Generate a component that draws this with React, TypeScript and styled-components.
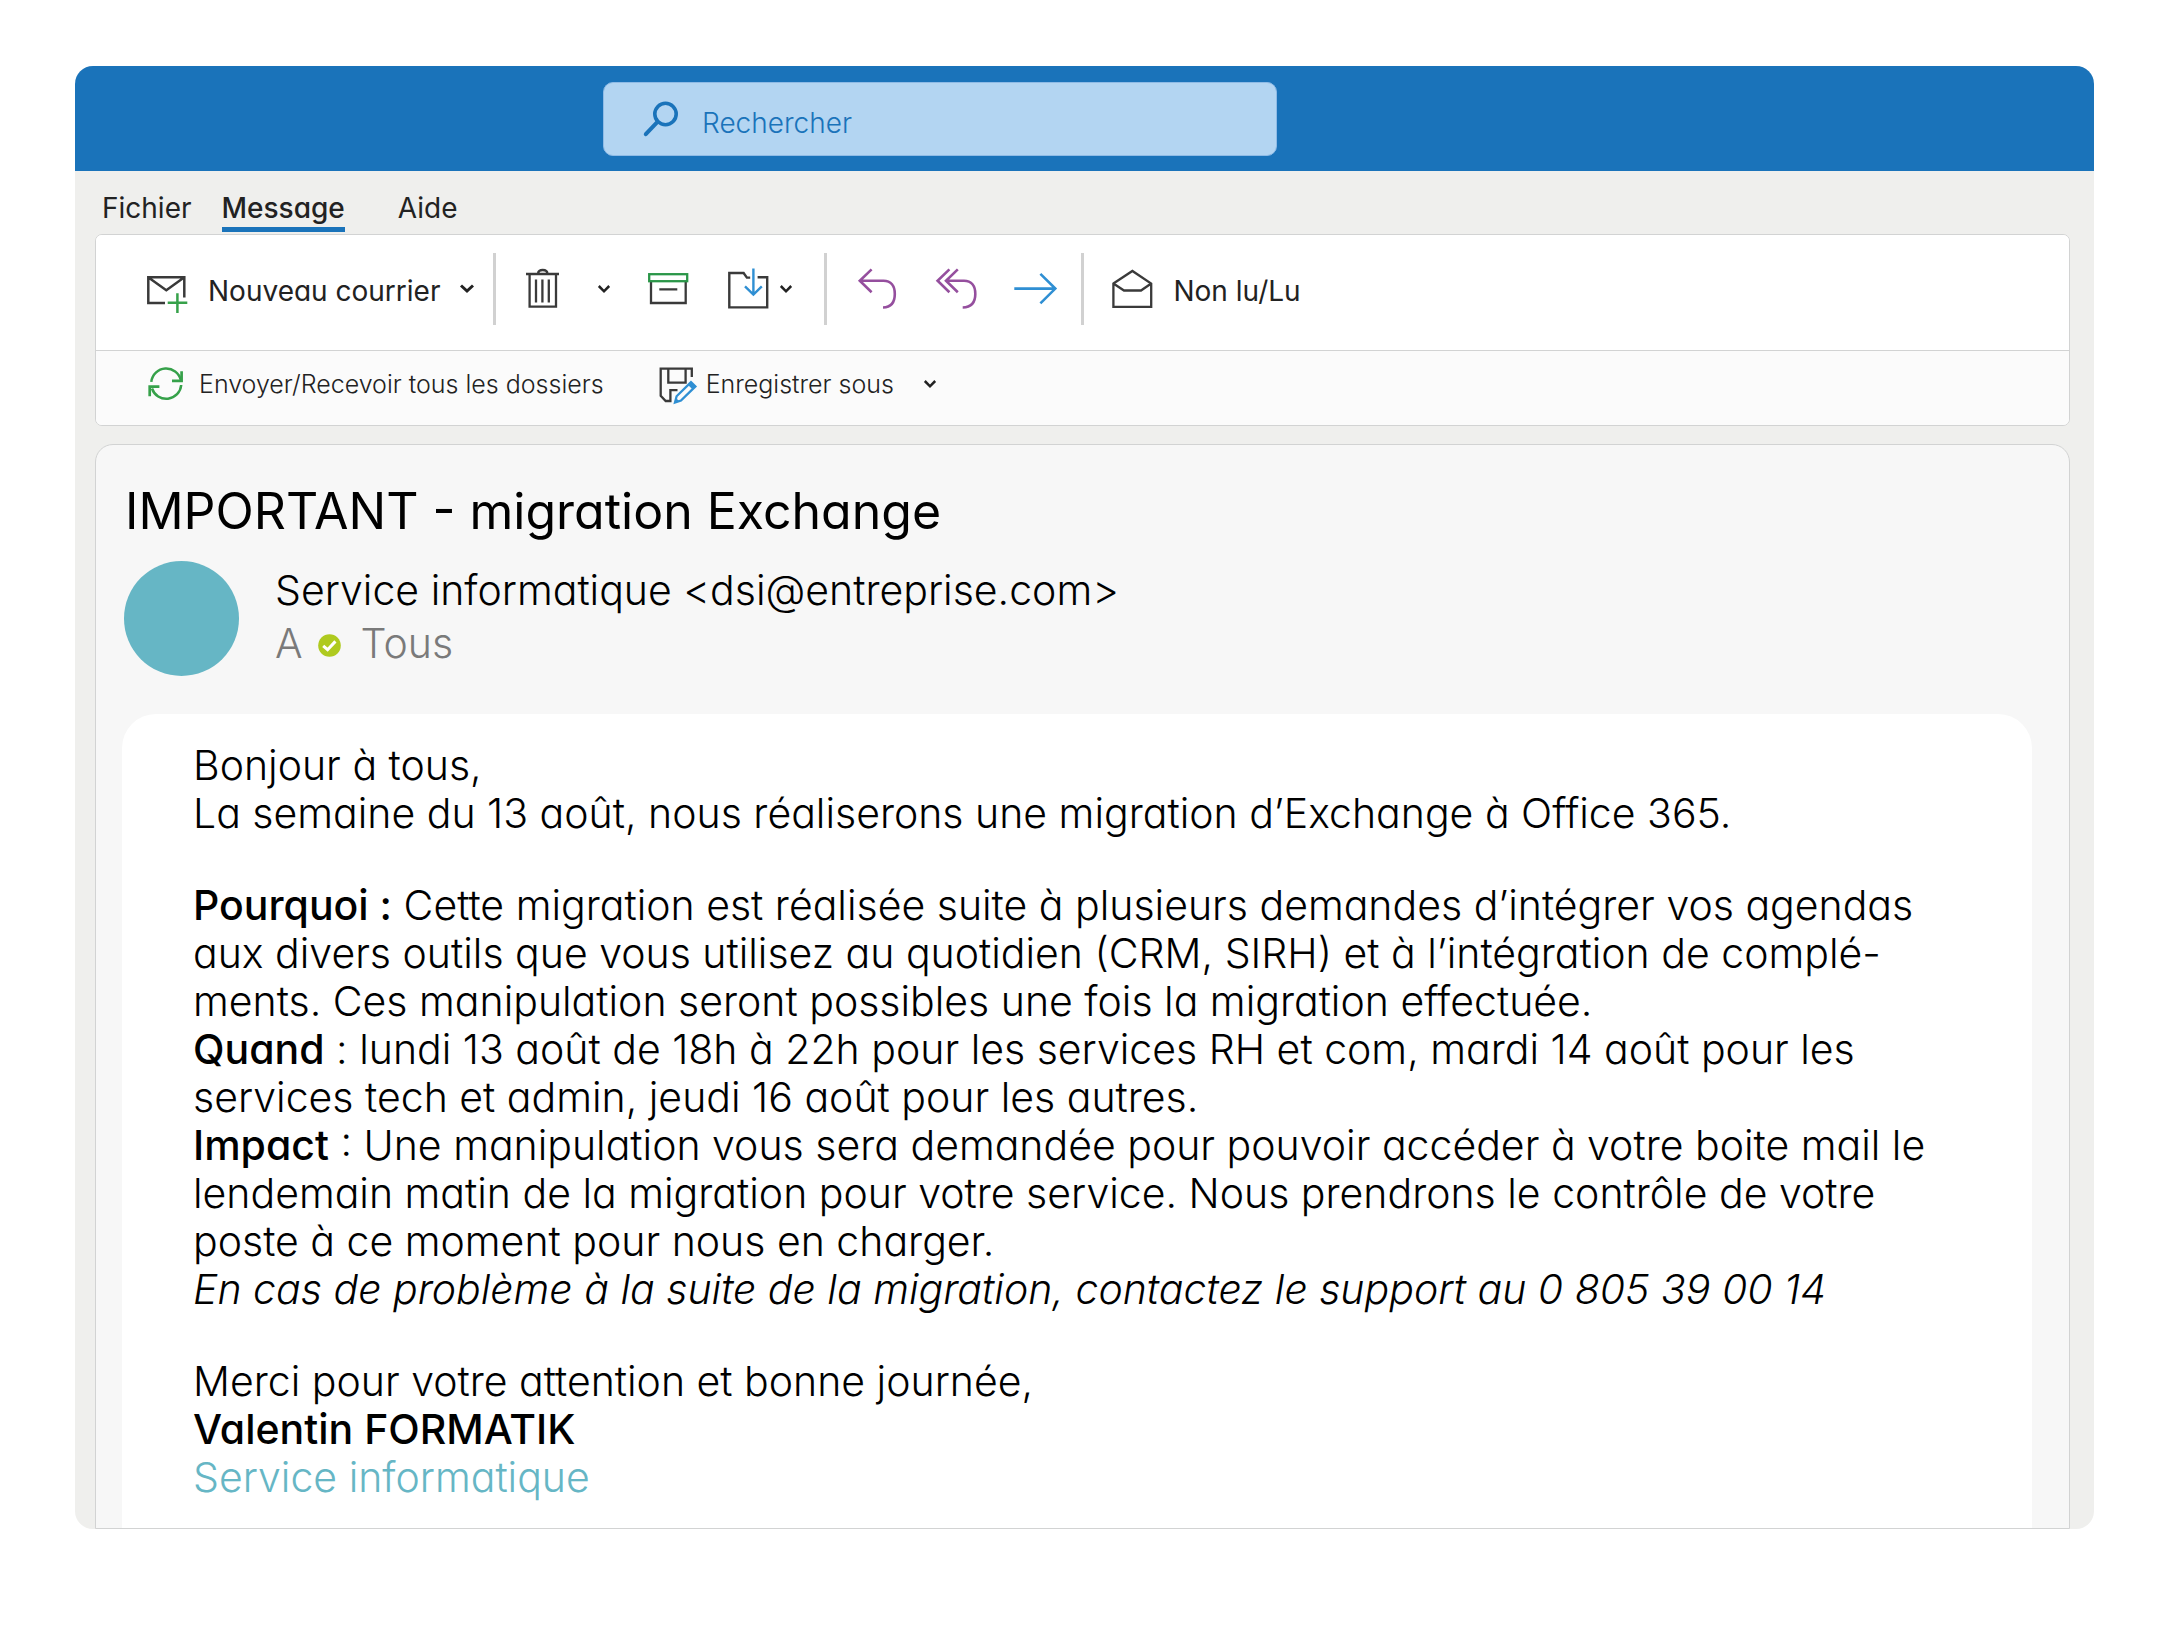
import React from "react";
import styled, { createGlobalStyle } from "styled-components";

const ink = "#222222";
const stroke = "#3a3a3a";
const blue = "#1a73ba";
const arrowBlue = "#2f8fd3";
const green = "#36a14a";
const purple = "#954f9e";
const teal = "#66b6c5";
const line = "#d2d3d3";

const GlobalStyle = createGlobalStyle`
  * { box-sizing: border-box; }
  body {
    margin: 0;
    background: #ffffff;
    color: ${ink};
    font-family: Inter, "Open Sans", sans-serif;
    font-feature-settings: "cv11" 1;
  }
  button, input { font: inherit; font-feature-settings: inherit; color: inherit; }
`;

const Page = styled.div`
  padding: 66px 84px 106px 75px;
`;

const Window = styled.main`
  display: flex;
  flex-direction: column;
  border-radius: 18px;
  overflow: hidden;
  background: #efefed;
`;

const TitleBar = styled.header`
  display: flex;
  padding: 16px 24px 15px 528px;
  background: ${blue};
`;

const SearchBox = styled.label`
  display: flex;
  align-items: center;
  gap: 24px;
  width: 674px;
  height: 74px;
  padding: 0 40px;
  border: 1px solid #8fbbe6;
  border-radius: 10px;
  background: #b3d5f2;
  color: ${blue};
`;

const SearchInput = styled.input`
  flex: 1;
  min-width: 0;
  padding: 8px 0 0;
  border: 0;
  outline: 0;
  background: transparent;
  font-size: 28px;
  font-weight: 300;
  line-height: 36px;
  &::placeholder { color: ${blue}; opacity: 1; }
`;

const Tabs = styled.nav`
  display: flex;
  height: 63px;
  padding: 17px 27px 0;
`;

const Tab = styled.button<{ $active?: boolean; $space?: number }>`
  height: 44px;
  margin: 0 ${(p) => p.$space ?? 0}px 0 0;
  padding: 0;
  border: 0;
  border-bottom: 5px solid ${(p) => (p.$active ? blue : "transparent")};
  background: transparent;
  font-size: 28px;
  font-weight: ${(p) => (p.$active ? 500 : 400)};
  line-height: 38px;
`;

const Ribbon = styled.section`
  margin: 0 24px 0 20px;
  border: 1px solid ${line};
  border-radius: 7px;
  overflow: hidden;
  background: #ffffff;
`;

const RibbonRow = styled.div<{ $quick?: boolean }>`
  display: flex;
  align-items: center;
  height: ${(p) => (p.$quick ? 75 : 115)}px;
  padding: ${(p) => (p.$quick ? "0 0 8px 52px" : "0 0 8px 51px")};
  background: ${(p) => (p.$quick ? "#fbfbfb" : "#ffffff")};
  border-top: ${(p) => (p.$quick ? `1px solid ${line}` : "0")};
`;

const Tool = styled.button<{ $gap?: number; $space?: number; $small?: boolean }>`
  display: flex;
  flex: none;
  align-items: center;
  gap: ${(p) => p.$gap ?? 0}px;
  margin: 0 ${(p) => p.$space ?? 0}px 0 0;
  padding: 0;
  border: 0;
  background: transparent;
  font-size: ${(p) => (p.$small ? 25 : 28)}px;
  font-weight: ${(p) => (p.$small ? 300 : 400)};
  line-height: 36px;
  white-space: nowrap;
`;

const ToolLabel = styled.span`
  padding-top: 4px;
`;

const Separator = styled.span<{ $space: number }>`
  flex: none;
  width: 3px;
  height: 72px;
  margin-right: ${(p) => p.$space}px;
  background: #d1d1d1;
`;

const Icon = styled.svg`
  display: block;
  flex: none;
  fill: none;
  overflow: visible;
`;

const Message = styled.article`
  margin: 18px 24px 0 20px;
  padding: 0 37px 0 26px;
  border: 1px solid ${line};
  border-radius: 18px 18px 0 0;
  background: #f7f7f7;
`;

const Subject = styled.h1`
  margin: 0;
  padding: 36px 0 20px 3px;
  color: #000000;
  font-size: 50px;
  font-weight: 400;
  line-height: 60px;
`;

const Sender = styled.div`
  display: flex;
  align-items: center;
  gap: 36px;
  padding-bottom: 38px;
`;

const Avatar = styled.div`
  width: 115px;
  height: 115px;
  margin-left: 2px;
  border-radius: 50%;
  background: ${teal};
`;

const SenderText = styled.div`
  padding-bottom: 4px;
  font-size: 41px;
  font-weight: 300;
  line-height: 53px;
  color: #000000;
`;

const Recipients = styled.div`
  display: flex;
  align-items: center;
  color: #7a7a7a;
`;

const Badge = styled.span`
  display: flex;
  margin: 4px 20px 0 15px;
`;

const Sheet = styled.div`
  min-height: 814px;
  padding: 27px 40px 19px 71px;
  border-radius: 34px 34px 0 0;
  background: #ffffff;
  color: #000000;
  font-size: 41px;
  font-weight: 300;
  line-height: 48px;
`;

const Paragraph = styled.p`
  margin: 0 0 44px;
  &:last-child { margin: 0; }
`;

const Strong = styled.strong`
  font-weight: 500;
`;

const Signature = styled.span`
  color: ${teal};
`;

const Chevron = ({ bold }: { bold?: boolean }) => (
  <Icon width={bold ? 14 : 12} height={bold ? 9 : 8} viewBox={bold ? "0 0 14 9" : "0 0 12 8"}>
    <path
      d={bold ? "M1 1.5L7 7L13 1.5" : "M.8 1L6 6.3L11.2 1"}
      stroke={ink}
      strokeWidth={bold ? 3 : 2.5}
    />
  </Icon>
);

const SearchIcon = () => (
  <Icon width="34" height="36" viewBox="0 0 34 36" stroke={blue}>
    <circle cx="21.5" cy="13" r="10.7" strokeWidth="3.6" />
    <path d="M13.5 20.8L1.8 33.2" strokeWidth="4" strokeLinecap="round" />
  </Icon>
);

const NewMailIcon = () => (
  <Icon width="41" height="50" viewBox="0 -12 41 50" strokeWidth="2.5" stroke={stroke}>
    <path d="M37.3 21.5V1.3H1.3V27H18M1.5 1.6L19.3 14.2L37 1.6" />
    <path d="M20.7 26.8H40.3M30.4 17.2V37" stroke={green} />
  </Icon>
);

const TrashIcon = () => (
  <Icon width="34" height="40" viewBox="0 0 34 40" strokeWidth="2.3" stroke={stroke}>
    <path d="M0 5H33M12 4.5C12.5 -.2 21 -.2 21.5 4.5M3.6 5.5V37.7H30V5.5M10 10.5V33.5M16.4 10.5V33.5M22.8 10.5V33.5" />
  </Icon>
);

const ArchiveIcon = () => (
  <Icon width="41" height="32" viewBox="0 0 41 32" strokeWidth="2.3" stroke={stroke}>
    <path d="M3 8.5V30H37.7V8.5M11.3 16.3H29.3" />
    <rect x="1.2" y="1.2" width="38" height="7" stroke="#2a9648" />
  </Icon>
);

const MoveIcon = () => (
  <Icon width="41" height="42" viewBox="0 0 41 42" strokeWidth="2.4" stroke={stroke}>
    <path d="M22.2 9.6H18.9L15.6 5H1.3V39.4H39.2V9.2H29.6" />
    <path d="M25.4 .6V26.6M17 18.4L25.4 26.6L33.8 18.4" stroke={arrowBlue} />
  </Icon>
);

const ReplyIcon = () => (
  <Icon width="39" height="42" viewBox="0 0 39 42" strokeWidth="2.6" stroke={purple}>
    <path d="M13.6 1.4L1.8 12.8L13.6 24.2M1.8 12.8H25.5C33 12.8 36.8 18 36.8 26C36.8 34 33 39.3 25 39.5" />
  </Icon>
);

const ReplyAllIcon = () => (
  <Icon width="41" height="42" viewBox="0 0 41 42" strokeWidth="2.6" stroke={purple}>
    <path d="M13.4 1.4L1.6 12.8L13.4 24.2M21.8 1.4L10 12.8L21.8 24.2M10 12.8H28C35.5 12.8 39.3 18 39.3 26C39.3 34 35.5 39.3 26.7 39.5" />
  </Icon>
);

const ForwardIcon = () => (
  <Icon width="43" height="32" viewBox="0 0 43 32" strokeWidth="2.6" stroke={arrowBlue}>
    <path d="M.3 15.6H41.3M26.4 .8L41.3 15.6L26.4 30.4" />
  </Icon>
);

const OpenMailIcon = () => (
  <Icon width="41" height="40" viewBox="0 0 41 40" strokeWidth="2.3" stroke={stroke}>
    <path d="M1.4 14.5L20.4 2L39.2 14.5V37.9H1.4ZM1.4 14.5L12 21.5H29L39.2 14.5" />
  </Icon>
);

const SyncIcon = () => (
  <Icon width="36" height="34" viewBox="0 0 36 34" strokeWidth="2.5" stroke={green}>
    <path d="M3.3 14.8A15 15 0 0 1 32.8 13M33.2 18A15 15 0 0 1 4 21.5" />
    <path d="M33.6 4.3V13.9H24M1.7 29.2V19.6H11.4" strokeWidth="2.7" />
  </Icon>
);

const SaveAsIcon = () => (
  <Icon width="39" height="42" viewBox="0 -4 39 42" strokeWidth="2.3" stroke={stroke}>
    <path d="M32.8 10V1.7H1.7V28.7L6.7 34H11.4V23.2H18.5M9.3 1.7V15.7H26.6V1.7" />
    <path d="M16 35.5L17.6 29.3L32 15.2L36.4 19.4L22 33.6Z" fill="#fbfbfb" stroke={arrowBlue} />
    <path d="M29 18L32.3 14.9L36.6 19.2L33.4 22.2ZM16 35.5L17 31L20.6 34.4Z" fill={arrowBlue} stroke="none" />
  </Icon>
);

const CheckBadge = () => (
  <Icon width="23" height="23" viewBox="0 0 23 23">
    <circle cx="11.5" cy="11.5" r="11.3" fill="#afca1f" />
    <path d="M5.2 11.8L9.6 15.7L17.4 7.4" stroke="#ffffff" strokeWidth="3" />
  </Icon>
);

export default function App() {
  return (
    <>
      <GlobalStyle />
      <Page>
        <Window>
          <TitleBar>
            <SearchBox>
              <SearchIcon />
              <SearchInput type="search" placeholder="Rechercher" aria-label="Rechercher" />
            </SearchBox>
          </TitleBar>

          <Tabs>
            <Tab $space={30}>Fichier</Tab>
            <Tab $active $space={53}>Message</Tab>
            <Tab>Aide</Tab>
          </Tabs>

          <Ribbon>
            <RibbonRow>
              <Tool $gap={20} $space={19}>
                <NewMailIcon />
                <ToolLabel>Nouveau courrier</ToolLabel>
                <Chevron bold />
              </Tool>
              <Separator $space={30} />
              <Tool $gap={38} $space={38} aria-label="Supprimer">
                <TrashIcon />
                <Chevron />
              </Tool>
              <Tool $space={39} aria-label="Archiver">
                <ArchiveIcon />
              </Tool>
              <Tool $gap={11} $space={32} aria-label="Déplacer">
                <MoveIcon />
                <Chevron />
              </Tool>
              <Separator $space={31} />
              <Tool $space={39} aria-label="Répondre">
                <ReplyIcon />
              </Tool>
              <Tool $space={37} aria-label="Répondre à tous">
                <ReplyAllIcon />
              </Tool>
              <Tool $space={24} aria-label="Transférer">
                <ForwardIcon />
              </Tool>
              <Separator $space={28} />
              <Tool $gap={20}>
                <OpenMailIcon />
                <ToolLabel>Non lu/Lu</ToolLabel>
              </Tool>
            </RibbonRow>
            <RibbonRow $quick>
              <Tool $small $gap={15} $space={55}>
                <SyncIcon />
                Envoyer/Recevoir tous les dossiers
              </Tool>
              <Tool $small $gap={8} $space={30}>
                <SaveAsIcon />
                Enregistrer sous
              </Tool>
              <Tool aria-label="Autres options">
                <Chevron />
              </Tool>
            </RibbonRow>
          </Ribbon>

          <Message>
            <Subject>IMPORTANT - migration Exchange</Subject>
            <Sender>
              <Avatar />
              <SenderText>
                <div>Service informatique &lt;dsi@entreprise.com&gt;</div>
                <Recipients>
                  A
                  <Badge><CheckBadge /></Badge>
                  Tous
                </Recipients>
              </SenderText>
            </Sender>
            <Sheet>
              <Paragraph>
                Bonjour à tous,
                <br />
                La semaine du 13 août, nous réaliserons une migration d’Exchange à Office 365.
              </Paragraph>
              <Paragraph>
                <Strong>Pourquoi :</Strong> Cette migration est réalisée suite à plusieurs demandes d’intégrer vos agendas
                <br />
                aux divers outils que vous utilisez au quotidien (CRM, SIRH) et à l’intégration de complé-
                <br />
                ments. Ces manipulation seront possibles une fois la migration effectuée.
                <br />
                <Strong>Quand</Strong> : lundi 13 août de 18h à 22h pour les services RH et com, mardi 14 août pour les
                <br />
                services tech et admin, jeudi 16 août pour les autres.
                <br />
                <Strong>Impact</Strong> : Une manipulation vous sera demandée pour pouvoir accéder à votre boite mail le
                <br />
                lendemain matin de la migration pour votre service. Nous prendrons le contrôle de votre
                <br />
                poste à ce moment pour nous en charger.
                <br />
                <em>En cas de problème à la suite de la migration, contactez le support au 0 805 39 00 14</em>
              </Paragraph>
              <Paragraph>
                Merci pour votre attention et bonne journée,
                <br />
                <Strong>Valentin FORMATIK</Strong>
                <br />
                <Signature>Service informatique</Signature>
              </Paragraph>
            </Sheet>
          </Message>
        </Window>
      </Page>
    </>
  );
}
